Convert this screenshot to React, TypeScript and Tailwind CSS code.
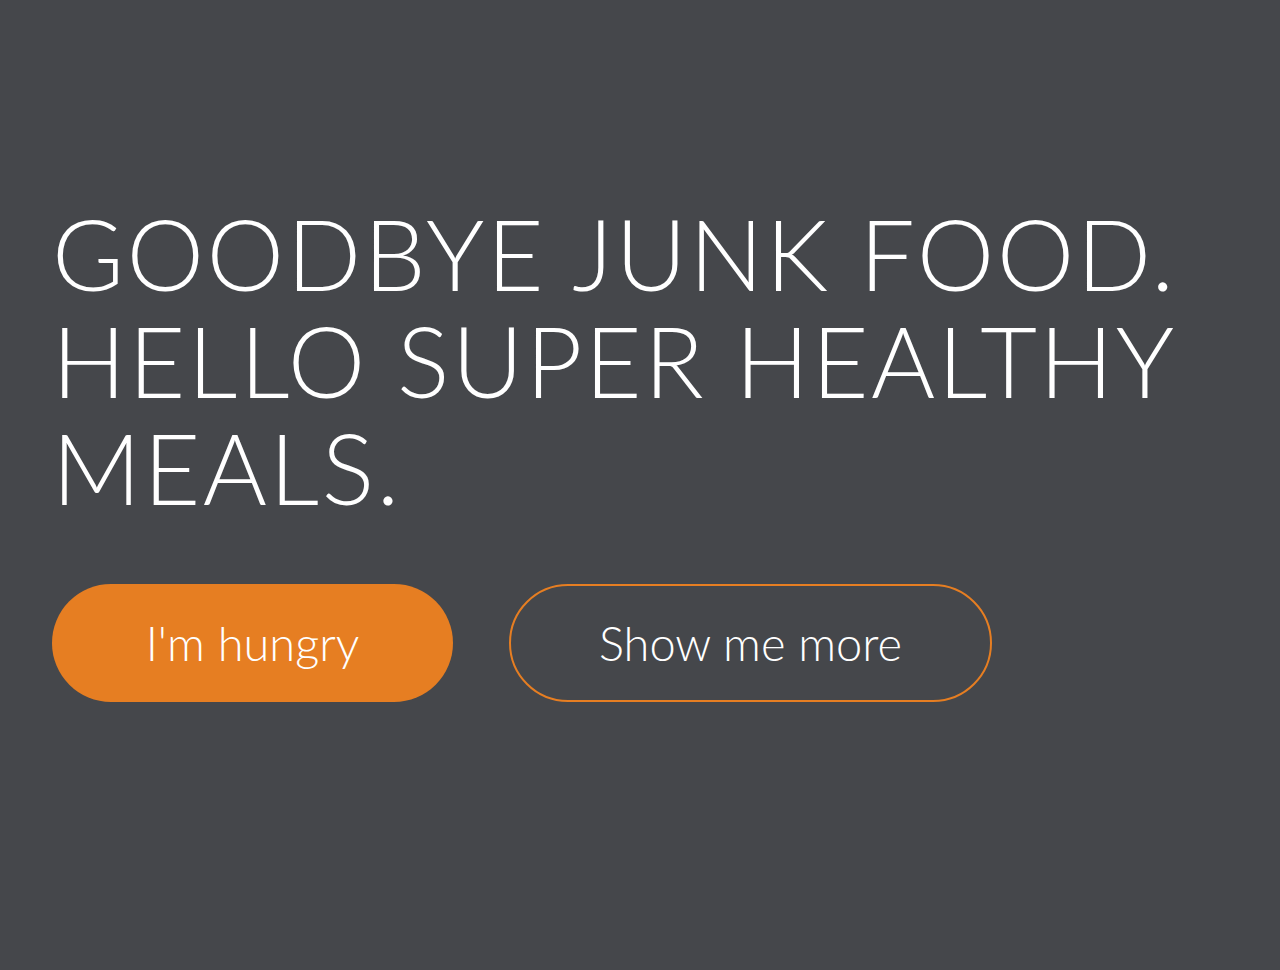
export default function App() {
  return (
    <div
      className="min-h-screen w-full bg-[#45474b] text-white"
      style={{ fontFamily: 'Lato, "Open Sans", sans-serif' }}
    >
      <div className="px-[52px] pt-[200px]">
        <h1 className="text-[98px] font-light leading-[107px] tracking-[2.5px] uppercase">
          Goodbye junk food.
          <br />
          Hello super healthy meals.
        </h1>
        <div className="mt-[63px] flex gap-[56px]">
          <a
            href="#"
            className="flex h-[118px] w-[401px] items-center justify-center rounded-full bg-[#e67e22] text-[47px] font-light text-white"
          >
            I'm hungry
          </a>
          <a
            href="#"
            className="flex h-[118px] w-[483px] items-center justify-center rounded-full border-2 border-[#e67e22] text-[47px] font-light text-white"
          >
            Show me more
          </a>
        </div>
      </div>
    </div>
  )
}
